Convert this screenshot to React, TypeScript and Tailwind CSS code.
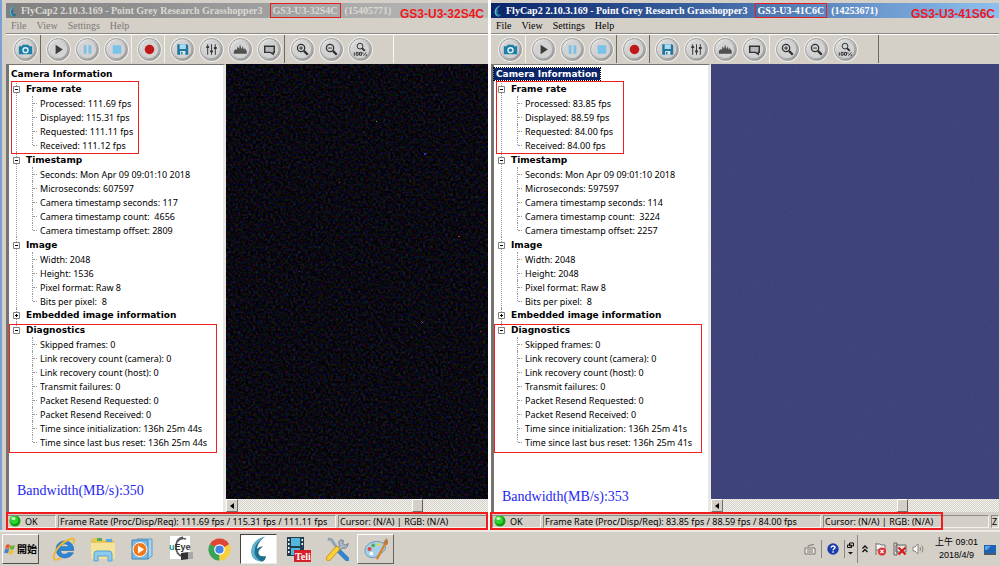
import React from 'react';

interface TreeGroup {
  title: string;
  open: boolean;
  marked?: 'rate' | 'diagnostics';
  items: string[];
}

interface Camera {
  id: string;
  active: boolean;
  model: string;
  serial: string;
  label: string;
  rate: string;
  bandwidth: string;
  groups: TreeGroup[];
}

const cameras: Camera[] = [
  {
    id: 'cam-32',
    active: false,
    model: 'GS3-U3-32S4C',
    serial: '(15405771)',
    label: 'GS3-U3-32S4C',
    rate: 'Frame Rate (Proc/Disp/Req): 111.69 fps / 115.31 fps / 111.11 fps',
    bandwidth: 'Bandwidth(MB/s):350',
    groups: [
      {
        title: 'Frame rate',
        open: true,
        marked: 'rate',
        items: ['Processed: 111.69 fps', 'Displayed: 115.31 fps', 'Requested: 111.11 fps', 'Received: 111.12 fps'],
      },
      {
        title: 'Timestamp',
        open: true,
        items: [
          'Seconds: Mon Apr 09 09:01:10 2018',
          'Microseconds: 607597',
          'Camera timestamp seconds: 117',
          'Camera timestamp count:  4656',
          'Camera timestamp offset: 2809',
        ],
      },
      { title: 'Image', open: true, items: ['Width: 2048', 'Height: 1536', 'Pixel format: Raw 8', 'Bits per pixel:  8'] },
      { title: 'Embedded image information', open: false, items: [] },
      {
        title: 'Diagnostics',
        open: true,
        marked: 'diagnostics',
        items: [
          'Skipped frames: 0',
          'Link recovery count (camera): 0',
          'Link recovery count (host): 0',
          'Transmit failures: 0',
          'Packet Resend Requested: 0',
          'Packet Resend Received: 0',
          'Time since initialization: 136h 25m 44s',
          'Time since last bus reset: 136h 25m 44s',
        ],
      },
    ],
  },
  {
    id: 'cam-41',
    active: true,
    model: 'GS3-U3-41C6C',
    serial: '(14253671)',
    label: 'GS3-U3-41S6C',
    rate: 'Frame Rate (Proc/Disp/Req): 83.85 fps / 88.59 fps / 84.00 fps',
    bandwidth: 'Bandwidth(MB/s):353',
    groups: [
      {
        title: 'Frame rate',
        open: true,
        marked: 'rate',
        items: ['Processed: 83.85 fps', 'Displayed: 88.59 fps', 'Requested: 84.00 fps', 'Received: 84.00 fps'],
      },
      {
        title: 'Timestamp',
        open: true,
        items: [
          'Seconds: Mon Apr 09 09:01:10 2018',
          'Microseconds: 597597',
          'Camera timestamp seconds: 114',
          'Camera timestamp count:  3224',
          'Camera timestamp offset: 2257',
        ],
      },
      { title: 'Image', open: true, items: ['Width: 2048', 'Height: 2048', 'Pixel format: Raw 8', 'Bits per pixel:  8'] },
      { title: 'Embedded image information', open: false, items: [] },
      {
        title: 'Diagnostics',
        open: true,
        marked: 'diagnostics',
        items: [
          'Skipped frames: 0',
          'Link recovery count (camera): 0',
          'Link recovery count (host): 0',
          'Transmit failures: 0',
          'Packet Resend Requested: 0',
          'Packet Resend Received: 0',
          'Time since initialization: 136h 25m 41s',
          'Time since last bus reset: 136h 25m 41s',
        ],
      },
    ],
  },
];

const glyphs: Record<string, React.ReactNode> = {
  Camera: (
    <g>
      <path d="M4 7.500h3l1-1.600h6L15 7.500h3v8.500H4z" fill="#1b7fa9" />
      <circle cx="11" cy="11.700" r="3.300" fill="#e8f4f8" />
      <circle cx="11" cy="11.700" r="1.800" fill="#1b7fa9" />
    </g>
  ),
  Play: <path d="M8 6v10l7.500-5z" fill="#3c3c3c" />,
  Pause: <path d="M7 6.500h3v9H7zM12 6.500h3v9h-3z" fill="#7cc0e4" />,
  Stop: <path d="M7 6.500h9v9H7z" fill="#78c3e8" />,
  Record: <circle cx="11" cy="11" r="5" fill="#c01818" />,
  Save: (
    <g>
      <path d="M5.500 5.500h10l1.500 1v10H5.500z" fill="#22749c" />
      <path d="M8 5.500h6.500v5H8z" fill="#a9dcf0" />
      <path d="M8.500 12.500h5.500v4H8.500z" fill="#d6e8ee" />
      <path d="M9.500 13.500h1.500v2.500H9.500z" fill="#22749c" />
    </g>
  ),
  'Camera control': (
    <g stroke="#333" fill="none">
      <path d="M7 5.500v11M11 5.500v11M15 5.500v11" />
      <path d="M5.500 8.500h3M9.500 13h3M13.500 9.500h3" strokeWidth="2" />
    </g>
  ),
  Histogram: <path d="M4 15.500v-3l2-2 1 1 1-4 1.500 3 1-5 1.500 5 1.500-3 1 4 1-2 2 3v3z" fill="#505050" />,
  Event: <path d="M6 7.500h10v6.500h-1v2l-3-2H6z" fill="#b8b8b8" stroke="#333" strokeWidth="1.500" />,
  'Zoom in': (
    <g stroke="#2f2f2f" fill="none">
      <circle cx="9.500" cy="9.500" r="3.800" strokeWidth="1.300" />
      <path d="M7.500 9.500h4M9.500 7.500v4" />
      <path d="M12.500 12.500l4 4" strokeWidth="2.400" />
    </g>
  ),
  'Zoom out': (
    <g stroke="#2f2f2f" fill="none">
      <circle cx="9.500" cy="9.500" r="3.800" strokeWidth="1.300" />
      <path d="M7.500 9.500h4" />
      <path d="M12.500 12.500l4 4" strokeWidth="2.400" />
    </g>
  ),
  'Zoom 100%': (
    <g stroke="#2f2f2f" fill="none">
      <circle cx="10.500" cy="7.500" r="3" />
      <path d="M12.500 9.500l3 3" strokeWidth="2" />
      <path d="M4.500 14v3.500M6.500 14h2v3h-2zM10 14h2v3h-2zM13.500 14v1.500M14 17.500l3-3.500M17 16v2" />
    </g>
  ),
};

const toolGroups = [
  ['Camera'],
  ['Play', 'Pause', 'Stop'],
  ['Record'],
  ['Save', 'Camera control', 'Histogram', 'Event'],
  ['Zoom in', 'Zoom out', 'Zoom 100%'],
];

const Swoosh = ({ className }: { className: string }) => (
  <svg viewBox="0 0 32 40" className={className} aria-hidden="true">
    <path d="M25 2C14 4 5 12 5 24c0 8 5 14 16 14 3-1 5-4 5-8-3 1-7 1-9-1-4-4-1-8 5-13-5 1-7 2-9 4 1-7 5-14 12-18z" fill="#1f6f90" />
    <path d="M25 2C15 8 10 14 10 21c-2 8 3 15 11 17C10 38 5 32 5 24 5 12 14 4 25 2z" fill="#5fb4cc" />
  </svg>
);

const Separator = ({ dark }: { dark: boolean }) => (
  <div className={`w-px h-7 mr-[3px] ${dark ? 'bg-[#6d6a66]' : 'bg-[#f2f0ec]'}`} />
);

const Toolbar = ({ active }: { active: boolean }) => (
  <div className="flex items-center h-[31px] pl-[5px] border-t border-[#8b8883] shadow-[inset_0_1px_0_#fff]">
    {toolGroups.map((group, index) => (
      <React.Fragment key={group[0]}>
        {index > 0 && <Separator dark={active ? index === 2 || index === 3 : index === 1 || index === 4} />}
        {group.map((name) => (
          <button key={name} type="button" aria-label={name} className="flex justify-center items-center w-[29px] h-7 shrink-0">
            <span className="flex justify-center items-center size-[25px] rounded-full bg-[#efeeec]">
              <svg viewBox="0 0 22 22" className="size-[23px] rounded-full border border-[#9a9a9a] bg-linear-to-br from-[#f4f4f4] to-[#909090]">
                <circle cx="11" cy="11" r="9" fill="#d3d3d3" />
                {glyphs[name]}
              </svg>
            </span>
          </button>
        ))}
      </React.Fragment>
    ))}
    <div className={`w-px h-7 ml-[18px] ${active ? 'bg-[#6d6a66]' : 'bg-[#f8f7f4]'}`} />
  </div>
);

const TitleBar = ({ camera }: { camera: Camera }) => (
  <div
    className={`relative flex items-center h-[15px] pl-px font-['Liberation_Serif',serif] text-[10px] font-bold whitespace-pre ${
      camera.active ? 'bg-linear-to-r from-[#0a246a] to-[#8fbfee] text-white' : 'bg-linear-to-r from-[#7f7f7f] to-[#bcbcbc] text-[#dcd9d2]'
    }`}
  >
    <Swoosh className="w-3 h-3 mr-0.5" />
    <h1>FlyCap2 2.10.3.169 - Point Grey Research Grasshopper3</h1>
    <span className="flex items-center h-[15px] ml-[7px] mr-1 px-0.5 border border-[#e02020]">{camera.model}</span>
    <span>{camera.serial}</span>
    <span className="absolute right-1 top-[3px] leading-4 font-['Liberation_Sans',sans-serif] text-xs text-[#f01818]">
      {camera.label}
    </span>
  </div>
);

const Leaf = ({ text, last }: { text: string; last: boolean }) => (
  <li className="flex items-center h-3.5">
    <span className={`w-px self-start border-l border-dotted border-[#9a9a9a] ${last ? 'h-[7px]' : 'h-3.5'}`} />
    <span className="w-1 mr-[3px] border-t border-dotted border-[#9a9a9a]" />
    <span className="whitespace-pre">{text}</span>
  </li>
);

const Group = ({ group, last }: { group: TreeGroup; last: boolean }) => (
  <li className={`relative ${group.open ? 'pt-px' : ''}`}>
    <span className={`absolute left-[7px] top-0 border-l border-dotted border-[#9a9a9a] ${last ? 'h-2' : 'h-full'}`} />
    <button type="button" aria-expanded={group.open} className="relative flex items-center h-3.5 pl-1 font-['DejaVu_Sans',sans-serif] text-[9px] font-bold">
      <svg viewBox="0 0 7 7" className="size-[7px] mr-1.5 bg-white" aria-hidden="true">
        <path d="M.5.5h6v6h-6z" fill="#fff" stroke="#808080" />
        <path d={group.open ? 'M2 3.500h3' : 'M2 3.500h3M3.500 2v3'} stroke="#000" />
      </svg>
      {group.title}
    </button>
    {group.open && (
      <ul className="pl-[23px]">
        {group.items.map((item, index) => (
          <Leaf key={item} text={item} last={index === group.items.length - 1} />
        ))}
      </ul>
    )}
    {group.marked === 'rate' && <span className="absolute left-0.5 top-0 w-32 h-[73px] border border-[#f02020]" />}
    {group.marked === 'diagnostics' && <span className="absolute left-0 top-0.5 right-1.5 h-[129px] border border-[#f02020]" />}
  </li>
);

const ScrollBar = ({ label }: { label: string }) => (
  <div
    role="scrollbar"
    aria-label={label}
    aria-controls={label}
    aria-valuenow={70}
    className="flex h-[13px] bg-[repeating-conic-gradient(#d4d0c8_0_25%,#f4f2ee_0_50%)] bg-size-[2px_2px]"
  >
    <button type="button" aria-label="Scroll left" className="flex justify-center items-center w-3 bg-[#d4d0c8] border border-t-white border-l-white border-r-[#707070] border-b-[#707070]">
      <svg viewBox="0 0 4 6" className="w-1 h-1.5"><path d="M4 0v6L0 3z" /></svg>
    </button>
    <div className="w-[174px]" />
    <div className="w-[11px] bg-[#d4d0c8] border border-t-white border-l-white border-r-[#606060] border-b-[#707070]" />
  </div>
);

const Picture = ({ camera }: { camera: Camera }) => (
  <svg id={camera.id} className={`flex-1 w-full h-0 ${camera.active ? 'bg-[#3f437b]' : 'bg-[#0a0a0c]'}`} role="img" aria-label={camera.label}>
    <filter id={`noise-${camera.id}`} x="0" y="0" width="100%" height="100%" colorInterpolationFilters="sRGB">
      <feTurbulence type="fractalNoise" baseFrequency={camera.active ? '0.7' : '0.4'} numOctaves="2" seed="8" />
      {camera.active ? (
        <feColorMatrix values="0.06 0 0 0 0.217 0 0.06 0 0 0.233 0 0 0.06 0 0.452 0 0 0 0 1" />
      ) : (
        <feColorMatrix values="0.4 0 0 0 -0.165 0 0.3 0 0 -0.115 0 0 0.6 0 -0.235 0 0 0 0 1" />
      )}
    </filter>
    <rect width="100%" height="100%" filter={`url(#noise-${camera.id})`} />
    {!camera.active && (
      <g>
        <path d="M232 172h2v1h-2zM195 257h1v1h-1zM254 267h1v1h-1z" fill="#d02020" />
        <path d="M113 118h1v1h-1zM184 117h1v1h-1z" fill="#b03030" />
        <path d="M198 89h2v2h-2zM73 207h1v1h-1z" fill="#3030d0" />
        <path d="M196 258h1v1h-1zM150 57h1v1h-1z" fill="#50a050" />
      </g>
    )}
  </svg>
);

const StatusBar = ({ camera }: { camera: Camera }) => {
  const cell = 'flex items-center h-[13px] border border-t-[#8d8a85] border-l-[#8d8a85] border-r-[#f4f2ee] border-b-[#f4f2ee] whitespace-pre overflow-hidden';
  return (
    <footer className="relative flex items-center gap-0.5 h-[18px] pl-px bg-[#d4d0c8]">
      <div className={`${cell} w-[49px] pl-px`}>
        <svg viewBox="0 0 12 12" className="size-3 mr-1" aria-hidden="true">
          <circle cx="6" cy="6" r="5.500" fill="#12a012" />
          <circle cx="5" cy="5" r="4" fill="#2fd52f" />
          <ellipse cx="4.500" cy="3.500" rx="2" ry="1.500" fill="#c8ffc0" />
        </svg>
        OK
      </div>
      <div className={`${cell} w-[278px] pl-px`}>{camera.rate}</div>
      <div className={`${cell} flex-1 pl-px`}>Cursor: (N/A) | RGB: (N/A)</div>
      {camera.active && <div className={`${cell} w-2`}>Z</div>}
      <span className={`absolute inset-y-0 border-2 border-[#ee1c1c] ${camera.active ? '-left-px right-[56px]' : 'left-0 right-0'}`} />
    </footer>
  );
};

const CameraWindow = ({ camera }: { camera: Camera }) => (
  <section className={`flex flex-col bg-[#d4d0c8] ${camera.active ? 'flex-1 min-w-0 pr-px border-l border-white' : 'w-[49%] pl-1 border-l-2 border-[#7ba0d4] border-r-2 border-r-white'}`}>
    <div className="flex flex-col flex-1 pt-[3px]">
      <TitleBar camera={camera} />
      <nav className={`flex gap-2.5 h-[15px] pl-[5px] font-['Liberation_Serif',serif] text-[10px] leading-[14px] ${camera.active ? 'text-black' : 'text-[#7c7974]'}`}>
        {['File', 'View', 'Settings', 'Help'].map((item) => (
          <button key={item} type="button">{item}</button>
        ))}
      </nav>
      <Toolbar active={camera.active} />
      <div className="flex flex-1">
        <aside className="w-[220px] shrink-0 bg-white border-l-3 border-t border-[#77746f] border-r-3 border-r-[#e9e7e3] pt-0.5">
          <h2 className="flex items-center h-3.5 font-['DejaVu_Sans',sans-serif] text-[9px] font-bold">
            <span className={`px-0.5 leading-3 ${camera.active ? 'bg-[#0a246a] text-white outline-1 outline-dotted outline-black' : ''}`}>
              Camera Information
            </span>
          </h2>
          <ul>
            {camera.groups.map((group, index) => (
              <Group key={group.title} group={group} last={index === camera.groups.length - 1} />
            ))}
          </ul>
          <p className={`pl-2 leading-5 font-['Liberation_Serif',serif] text-sm text-[#2626f0] ${camera.active ? 'pt-[38px]' : 'pt-8'}`}>
            {camera.bandwidth}
          </p>
        </aside>
        <div className="flex flex-col flex-1 min-w-0">
          <Picture camera={camera} />
          <ScrollBar label={camera.id} />
        </div>
      </div>
      <StatusBar camera={camera} />
    </div>
  </section>
);

const apps: { name: string; state?: 'active' | 'raised'; icon: React.ReactNode }[] = [
  {
    name: 'Internet Explorer',
    icon: (
      <svg viewBox="0 0 26 26" className="size-6">
        <path d="M23.500 14.500H9c.3 4.500 6 5.500 8 2.500h6c-4 8.500-18.500 7.500-18.500-4C4.500 1.500 24 1 23.500 14.500zM9.500 10.500H18c-.5-4-8-4-8.500 0z" fill="#2a86d8" stroke="#155aa0" strokeWidth=".6" />
        <path d="M2.500 24C-.5 20 7 9 15 4.500c5-3 9-4 9-1 0 1-.5 2-1 3.500M2.500 24c1.500 1.500 5 0 7.500-1.500" fill="none" stroke="#f0b828" strokeWidth="2" />
      </svg>
    ),
  },
  {
    name: 'Explorer',
    icon: (
      <svg viewBox="0 0 26 26" className="size-[26px]">
        <path d="M1 4l2-2h7l1 2h13v19H1z" fill="#e6c55c" />
        <path d="M1 7h24v16H1z" fill="#f6e39a" />
        <path d="M7 2h5v3H7z" fill="#4fb050" />
        <path d="M16 3h6v3h-6z" fill="#5ca8e0" />
        <path d="M4 25v-7q0-3 3-3h12q3 0 3 3v7h-4v-5H8v5z" fill="#8ccbee" stroke="#5aa2d0" />
      </svg>
    ),
  },
  {
    name: 'Media Player',
    icon: (
      <svg viewBox="0 0 24 24" className="size-6">
        <path d="M7 2h15v17l-4 3z" fill="#a9d3ee" stroke="#5d9cc8" />
        <path d="M2 3h16v19H2z" fill="#7cb7e2" stroke="#3f85bb" />
        <circle cx="10" cy="12.500" r="7" fill="#f07a1a" stroke="#fff" />
        <path d="M8 8.500v8l6-4z" fill="#fff" />
      </svg>
    ),
  },
  {
    name: 'uEye',
    icon: (
      <svg viewBox="0 0 26 28" className="w-[26px] h-7">
        <path d="M2 1h20v23H2z" fill="#fff" />
        <path d="M15 2c-5 1-7 5-7 10s3 9 7 10M9 7c3-4 6-4 9-3M9 18c3 3 6 3 8 2" fill="none" stroke="#555" strokeWidth="1.500" />
        <text x="1" y="15" fontSize="9" fontWeight="bold" fontFamily="Liberation Sans, sans-serif"><tspan fill="#149090">u</tspan><tspan fill="#333">Eye</tspan></text>
        <path d="M13 18l8-1v7l-8 1z" fill="#333" />
        <path d="M20 17h5v7h-5z" fill="#a8a8a8" />
      </svg>
    ),
  },
  {
    name: 'Chrome',
    icon: (
      <svg viewBox="0 0 24 24" className="size-[23px]">
        <path d="M12 12L2.040 6.250A11.500 11.500 0 0 1 21.960 6.250z" fill="#e04535" />
        <path d="M12 12L21.960 6.250A11.500 11.500 0 0 1 12 23.500z" fill="#f8cf3a" />
        <path d="M12 12v11.500A11.500 11.500 0 0 1 2.040 6.250z" fill="#39a456" />
        <path d="M12 6.500h10L12 12z" fill="#e04535" />
        <path d="M7 15L2 6.500 12 12z" fill="#39a456" />
        <path d="M17 15l-5 8.500V12z" fill="#f8cf3a" />
        <circle cx="12" cy="12" r="5.500" fill="#fff" />
        <circle cx="12" cy="12" r="4.300" fill="#4285e8" />
      </svg>
    ),
  },
  { name: 'FlyCap2', state: 'active', icon: <Swoosh className="w-[22px] h-7" /> },
  {
    name: 'Teli',
    icon: (
      <svg viewBox="0 0 26 28" className="w-[26px] h-7">
        <path d="M2 2h17v19H2z" fill="#223c50" />
        <path d="M6 3h9v8H6zM6 13h9v7H6z" fill="#55b6dd" />
        <path d="M3 4h1.500v2H3zM3 8h1.500v2H3zM3 12h1.500v2H3zM3 16h1.500v2H3zM16.500 4H18v2h-1.500zM16.500 8H18v2h-1.500z" fill="#fff" />
        <path d="M9 15h17v12H9z" fill="#d81e28" />
        <text x="10" y="25" fontSize="10" fontWeight="bold" fill="#fff" fontFamily="Liberation Serif, serif">Teli</text>
      </svg>
    ),
  },
  {
    name: 'Tools',
    icon: (
      <svg viewBox="0 0 26 26" className="size-6">
        <path d="M3 2l4 1 4 6 9 11" fill="none" stroke="#8fa3b4" strokeWidth="3" />
        <path d="M15 15l9 9" stroke="#3584cc" strokeWidth="5" strokeLinecap="round" />
        <path d="M17 3c-3 2-2 5-1 6l-3 4 2 2 4-3c3 1 6-1 6-5l-3 2-3-2 1-3z" fill="#a8b8c4" stroke="#657684" />
        <path d="M13 13L4 23" stroke="#d99a10" strokeWidth="6" strokeLinecap="round" />
        <path d="M13 13L4 23" stroke="#fad043" strokeWidth="4" strokeLinecap="round" />
      </svg>
    ),
  },
  {
    name: 'Paint',
    state: 'raised',
    icon: (
      <svg viewBox="0 0 28 26" className="w-[26px] h-6">
        <path d="M2 15C2 8 10 4 17 5c8 1 9 8 5 11-2 2-4 1-5 3-2 5-15 5-15-4z" fill="#a5d0ea" stroke="#6796b8" />
        <circle cx="7" cy="13" r="2.200" fill="#e04838" />
        <circle cx="11" cy="9" r="2" fill="#4cae4c" />
        <circle cx="17" cy="8" r="1.800" fill="#f1cf3d" />
        <circle cx="9" cy="18" r="2" fill="#fff" />
        <path d="M24 7L15 24" stroke="#dd8126" strokeWidth="2.500" />
        <path d="M22 7c0-3 2-3 3-6 2 2 3 5 1 8z" fill="#b97b48" />
      </svg>
    ),
  },
];

const TrayIcons = () => (
  <>
    <svg viewBox="0 0 12 12" className="size-3 mr-[5px]" aria-label="Input method">
      <path d="M1 5h10v6H1z" fill="#eeece8" stroke="#77746f" />
      <path d="M3 7h6M3 9h6M4 4q0-2 3-2t3-1" fill="none" stroke="#77746f" />
    </svg>
    <span className="w-px h-[18px] bg-[#8a8782]" />
    <svg viewBox="0 0 12 12" className="size-3 mx-[5px]" aria-label="Help">
      <circle cx="6" cy="6" r="5.700" fill="#1b3cab" />
      <path d="M4.200 4.700C4.200 2.500 8 2.500 8 4.500c0 1.300-1.900 1.200-1.900 2.700M6.100 8.300v1.400" fill="none" stroke="#fff" strokeWidth="1.400" />
    </svg>
    <span className="w-px h-[18px] bg-[#8a8782]" />
    <svg viewBox="0 0 8 14" className="w-2 h-3.5 mx-0.5" aria-label="Restore">
      <path d="M2.500 1h4v3h-4zM.5 3h4v2.500h-4z" fill="#d4d0c8" stroke="#111" />
      <path d="M1 10h5L3.500 12.500z" fill="#111" />
    </svg>
    <span className="w-px h-7 bg-[#8a8782] mr-1" />
    <svg viewBox="0 0 6 8" className="w-1.5 h-2 mr-1.5" aria-label="Show hidden icons">
      <path d="M.5 3.500L3 1l2.500 2.500M.5 7L3 4.500 5.500 7" fill="none" stroke="#111" strokeWidth="1.300" />
    </svg>
    <svg viewBox="0 0 13 14" className="w-[13px] h-3.5 mr-1.5" aria-label="Action center">
      <path d="M2 13V1M2 2h4l1 1h4v6H7L6 8H2" fill="#f4f4f4" stroke="#77746f" />
      <circle cx="8" cy="9.500" r="4" fill="#dd3434" />
      <path d="M6.500 8l3 3M9.500 8l-3 3" stroke="#fff" strokeWidth="1.200" />
    </svg>
    <svg viewBox="0 0 14 14" className="size-3.5 mr-[5px]" aria-label="Network">
      <path d="M3 3h10v7H3zM1 1h3v12H1z" fill="#e4e2de" stroke="#66635e" />
      <path d="M5.500 5.500l7 7M12.500 5.500l-7 7" stroke="#d81818" strokeWidth="2" />
    </svg>
    <svg viewBox="0 0 13 12" className="w-[13px] h-3 mr-2.5" aria-label="Volume">
      <path d="M1 4h2l3-3v10L3 8H1z" fill="#fff" stroke="#8a8782" />
      <path d="M8 4q1 2 0 4M10 2.500q2 3.500 0 7" fill="none" stroke="#8a8782" />
    </svg>
  </>
);

const Taskbar = () => (
  <div className="flex items-center h-9 pl-0.5 bg-[#d4d0c8] border-t-2 border-[#eceae6]">
    <button type="button" className="flex items-center justify-center gap-px w-[37px] h-[30px] border border-t-white border-l-white border-r-[#55524e] border-b-[#55524e] font-['Noto_Sans_CJK_TC',sans-serif] text-[10px] font-bold">
      <svg viewBox="0 0 12 12" className="size-3" aria-hidden="true">
        <path d="M2 2q2-1.500 4 0L5 6Q3 4.500 1 6z" fill="#e8582a" />
        <path d="M6.500 2q2 1.500 4.500 0L10 6q-2 1.500-4.500 0z" fill="#70b040" />
        <path d="M1 6.500q2-1.500 4 0l-1 4q-2-1.500-4 0z" fill="#3b82d0" />
        <path d="M5.300 6.700q2 1.500 4.500 0l-1 4q-2 1.500-4.500 0z" fill="#f0c030" />
      </svg>
      開始
    </button>
    <div className="flex items-center pl-1.5">
      {apps.map((app) => (
        <button
          key={app.name}
          type="button"
          aria-label={app.name}
          className={`flex justify-center items-center w-[37px] h-[30px] mr-0.5 ${
            app.state === 'active' ? 'bg-white border border-t-[#44413d] border-l-[#44413d] border-r-[#eceae6] border-b-[#eceae6]' : ''
          } ${app.state === 'raised' ? 'border border-t-white border-l-white border-r-[#66635e] border-b-[#66635e]' : ''}`}
        >
          {app.icon}
        </button>
      ))}
    </div>
    <div className="flex items-center ml-auto pr-1">
      <TrayIcons />
      <time className="w-[43px] mr-1.5 text-center leading-[13px] whitespace-nowrap font-['Liberation_Sans','Noto_Sans_CJK_TC',sans-serif] text-[9px]">
        上午 09:01
        <br />
        2018/4/9
      </time>
      <svg viewBox="0 0 12 11" className="w-3 h-[11px]" aria-label="Show desktop">
        <path d="M0 1h12v8H0z" fill="#1d62b5" />
        <path d="M1 2h6L3 6H1z" fill="#5ba2e0" />
        <path d="M0 9h12v2H0z" fill="#4c5966" />
      </svg>
    </div>
  </div>
);

const App: React.FC = () => {
  return (
    <main className="flex flex-col min-h-screen bg-[#d4d0c8] font-['Noto_Sans',sans-serif] text-[9px] leading-none text-black">
      <div className="flex flex-1">
        {cameras.map((camera) => (
          <CameraWindow key={camera.id} camera={camera} />
        ))}
      </div>
      <Taskbar />
    </main>
  );
};

export default App;
